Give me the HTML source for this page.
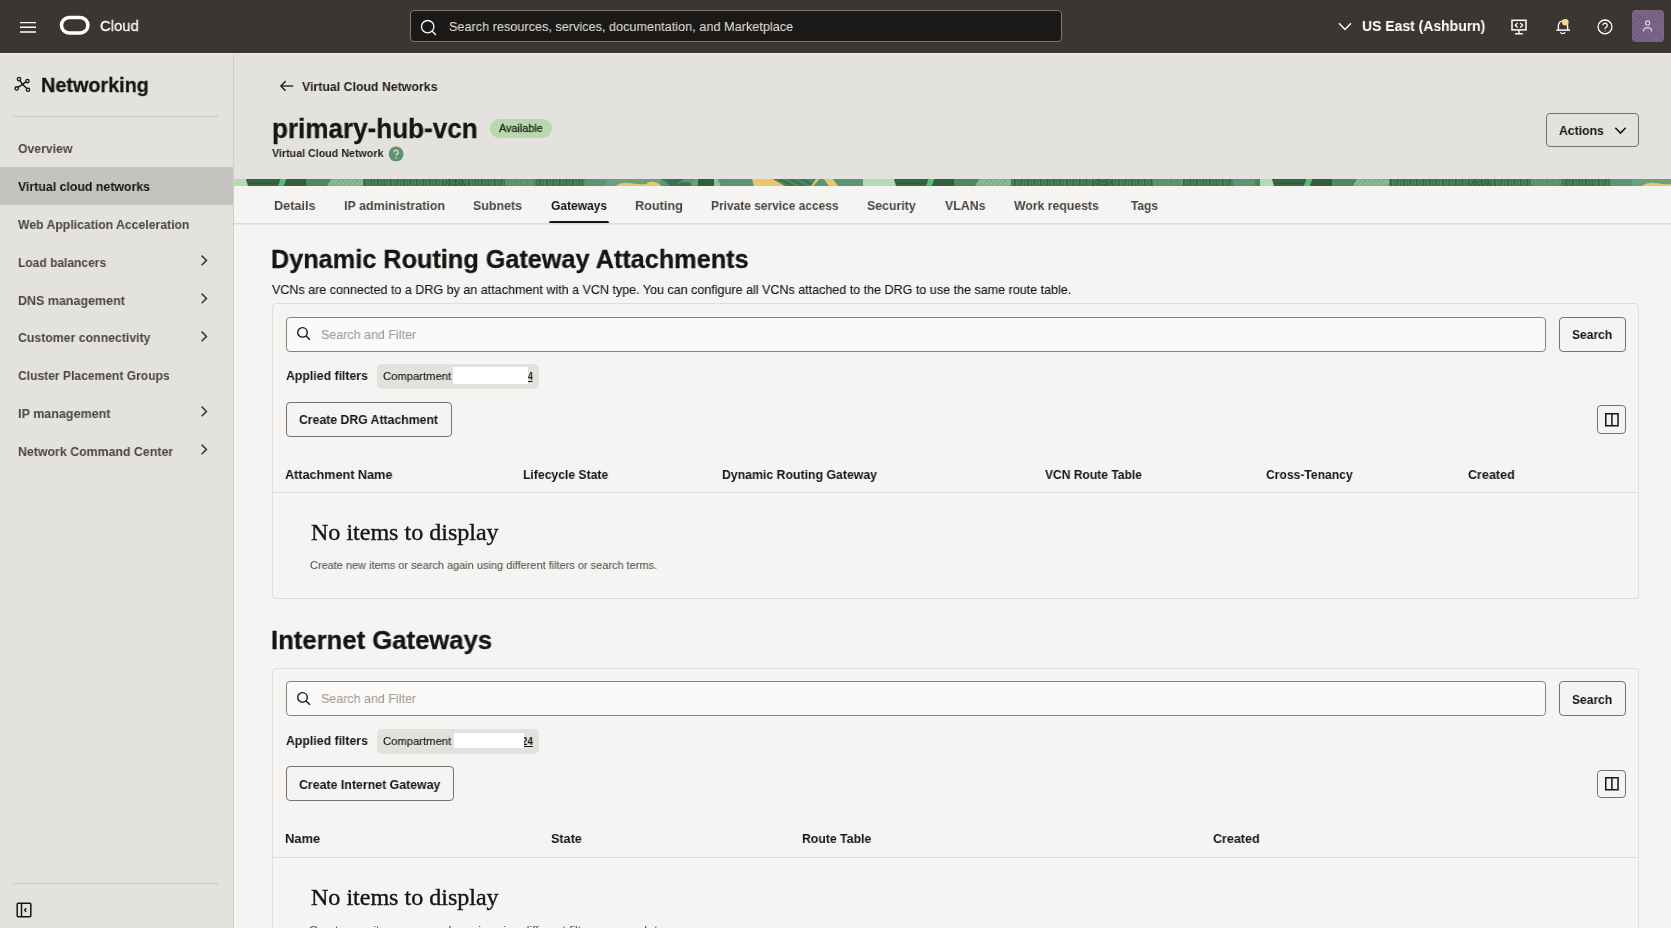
<!DOCTYPE html>
<html lang="en">
<head>
<meta charset="utf-8">
<title>primary-hub-vcn | Virtual Cloud Networks | Oracle Cloud</title>
<style>
*{box-sizing:border-box;margin:0;padding:0}
html,body{width:1671px;height:928px;overflow:hidden;background:#f5f4f2}
body{font-family:"Liberation Sans",sans-serif;color:#161513;position:relative;font-size:13.5px}
.abs{position:absolute}
.t{will-change:transform;transform-origin:0 0;position:absolute;white-space:nowrap;line-height:1;font-weight:normal;z-index:5}
#top{position:absolute;left:0;top:0;width:1671px;height:53px;background:#3a3632;border-bottom:1px solid #393531;z-index:3}
#toplight{position:absolute;left:0;top:53px;width:1671px;height:1px;background:#edebe8;z-index:2}
#gsearch{position:absolute;left:410px;top:10px;width:652px;height:32px;background:#1b1917;border:1px solid #7d7873;border-radius:4px}
#avatar{position:absolute;left:1632px;top:10px;width:32px;height:32px;border-radius:4px;background:#7b6487;overflow:hidden}
#side{position:absolute;left:0;top:52px;width:234px;height:876px;background:#e4e2de;border-right:1px solid #d2cfcb}
.navsel{position:absolute;left:0;width:233px;height:37.700px;background:#c5c3bf}
.hr{position:absolute;height:1px;background:#c9c5c0}
#hdr{position:absolute;left:234px;top:52px;width:1437px;height:127px;background:#e4e2de}
#band{position:absolute;left:234px;top:179px;width:1437px;height:7.500px;overflow:hidden;background:#5c8a68}
#tabs{position:absolute;left:234px;top:186px;width:1437px;height:37px;background:#f5f4f2;box-shadow:0 1px 0 #dcdad7,0 2px 0 #ebe9e7}
.btn{position:absolute;border:1px solid #77726d;border-radius:4px;background:transparent}
.panel{position:absolute;left:272px;width:1367px;border:1px solid #dfdcd9;border-radius:4px;background:#f5f4f2}
.sinput{position:absolute;left:13px;width:1260px;height:35px;border:1px solid #85817d;border-radius:4px;background:#fbfaf9}
.chip{position:absolute;left:104px;width:162px;height:25px;border-radius:5px;background:#e3e1dd}
.chip .red{position:absolute;background:#fff;z-index:6}
.serif{font-family:"Liberation Serif",serif}
</style>
</head>
<body>
<!-- ============ TOP BAR ============ -->
<div id="top">
  <svg class="abs" style="left:19px;top:21px" width="18" height="13" viewBox="0 0 18 13"><path d="M1 1.600h16M1 6.300h16M1 11h16" stroke="#fff" stroke-width="1.400" fill="none"/></svg>
  <svg class="abs" style="left:59px;top:15px" width="32" height="21" viewBox="0 0 32 21"><rect x="2.500" y="2.500" width="26.400" height="15.500" rx="7.750" fill="none" stroke="#fff" stroke-width="3.500"/></svg>
  <div id="gsearch">
    <svg class="abs" style="left:9px;top:8px" width="18" height="18" viewBox="0 0 18 18"><circle cx="7.700" cy="7.700" r="6.200" fill="none" stroke="#fff" stroke-width="1.300"/><path d="M12.200 12.200L16 16" stroke="#fff" stroke-width="1.300"/></svg>
  </div>
  <svg class="abs" style="left:1338px;top:22px" width="14" height="10" viewBox="0 0 14 10"><path d="M1 1.300l6 6.200 6-6.200" stroke="#fff" stroke-width="1.400" fill="none"/></svg>
  <!-- cloud shell -->
  <svg class="abs" style="left:1510px;top:18px" width="18" height="18" viewBox="0 0 18 18" fill="none" stroke="#fff" stroke-width="1.500"><rect x="2" y="2.300" width="14" height="9.600"/><path d="M8.900 12v3.600M5.100 15.700h7.700" stroke-width="1.400"/><path d="M7.600 4.900L5.300 7.200l2.300 2.300M10.300 4.900l2.300 2.300-2.300 2.300" stroke-width="1.300"/></svg>
  <!-- bell -->
  <svg class="abs" style="left:1554px;top:17px" width="18" height="19" viewBox="0 0 18 19" fill="none" stroke="#fff" stroke-width="1.400"><path d="M4.400 12.800V8.600a4.600 4.600 0 0 1 9.200 0v4.200"/><path d="M2.400 13.100h13.600" stroke-width="1.500"/><path d="M6.300 15.300c1 1.800 3.900 1.800 4.900 0" stroke-width="1.300"/><circle cx="11.300" cy="5.300" r="3.300" fill="#f5d88c" stroke="none"/></svg>
  <!-- help -->
  <svg class="abs" style="left:1596px;top:18px" width="18" height="18" viewBox="0 0 18 18" fill="none" stroke="#fff" stroke-width="1.300"><circle cx="9" cy="8.900" r="6.900"/><path d="M6.800 7.300a2.200 2.200 0 1 1 3.400 1.900c-.8.500-1.200.9-1.200 1.700"/><circle cx="9" cy="12.800" r=".6" fill="#fff" stroke="none"/></svg>
  <div id="avatar">
    <svg class="abs" style="left:0;top:0" width="32" height="32" viewBox="0 0 32 32" fill="none"><g stroke="#6b5777" stroke-width="1"><path d="M-2 6L26 34M-2 10L22 34M-2 14L18 34M-2 18L14 34M-2 22L10 34M-2 26L6 34M2 4L30 30M6 4L31 27"/><path d="M6 8L30 2M4 12L31 5M8 15L32 9" stroke-dasharray="3 2" opacity=".8"/></g><circle cx="15.600" cy="12.900" r="2.100" stroke="#ddd4de" stroke-width="1.200"/><path d="M11.500 21.600c0-3 1.800-3.900 4.100-3.900s4.100.9 4.100 3.900" stroke="#ddd4de" stroke-width="1.200"/></svg>
  </div>
</div>

<div id="toplight"></div>

<!-- ============ SIDEBAR ============ -->
<div id="side">
  <svg class="abs" style="left:14px;top:24px" width="17" height="17" viewBox="0 0 17 17" fill="none" stroke="#161513" stroke-width="1.300"><circle cx="5" cy="3" r="1.650"/><circle cx="13.400" cy="5.100" r="1.650"/><circle cx="2.700" cy="12.400" r="1.650"/><circle cx="14" cy="13.750" r="1.650"/><path d="M5.900 4.300L8.600 8.400M12 5.900L8.600 8.400M3.900 11.400L8.600 8.400M12.900 12.600L8.600 8.400" stroke-width="1.400"/></svg>
  <div class="hr" style="left:13px;top:64px;width:205px"></div>
  <div class="navsel" style="top:115.100px"></div>
  <svg class="abs" style="left:199px;top:201px" width="10" height="14" viewBox="0 0 10 14"><path d="M2.600 2.600l4.900 4.800-4.900 4.800" fill="none" stroke="#3c3834" stroke-width="1.500"/></svg>
  <svg class="abs" style="left:199px;top:239px" width="10" height="14" viewBox="0 0 10 14"><path d="M2.600 2.600l4.900 4.800-4.900 4.800" fill="none" stroke="#3c3834" stroke-width="1.500"/></svg>
  <svg class="abs" style="left:199px;top:277px" width="10" height="14" viewBox="0 0 10 14"><path d="M2.600 2.600l4.900 4.800-4.900 4.800" fill="none" stroke="#3c3834" stroke-width="1.500"/></svg>
  <svg class="abs" style="left:199px;top:352px" width="10" height="14" viewBox="0 0 10 14"><path d="M2.600 2.600l4.900 4.800-4.900 4.800" fill="none" stroke="#3c3834" stroke-width="1.500"/></svg>
  <svg class="abs" style="left:199px;top:390px" width="10" height="14" viewBox="0 0 10 14"><path d="M2.600 2.600l4.900 4.800-4.900 4.800" fill="none" stroke="#3c3834" stroke-width="1.500"/></svg>
  
  <div class="hr" style="left:13px;top:831px;width:205px"></div>
  <svg class="abs" style="left:16px;top:850px" width="16" height="16" viewBox="0 0 16 16" fill="none" stroke="#161513" stroke-width="1.500"><rect x="1.200" y="1.200" width="13.600" height="13.600" rx="1"/><path d="M5.500 1.200v13.600"/><path d="M10.300 6.200L8.500 8l1.800 1.800" stroke-width="1.300"/></svg>
</div>

<!-- ============ PAGE HEADER ============ -->
<div id="hdr">
  <svg class="abs" style="left:45px;top:28px" width="15" height="12" viewBox="0 0 15 12"><path d="M14.300 6H2.200" fill="none" stroke="#161513" stroke-width="1.250"/><path d="M6.600 1.300L1.900 6l4.700 4.700" fill="none" stroke="#161513" stroke-width="1.400"/></svg>
  <div class="abs" style="left:256px;top:67px;width:62px;height:19px;border-radius:10px;background:#b9d8ae"></div>
  <svg class="abs" style="left:154px;top:94px" width="16" height="16" viewBox="0 0 16 16"><circle cx="8.100" cy="7.900" r="7.400" fill="#61926f"/><path d="M5.900 6.200a2.100 2.100 0 1 1 3.100 1.900c-.7.400-1 .8-1 1.500" fill="none" stroke="#e4e2de" stroke-width="1.300"/><circle cx="8" cy="11.700" r=".8" fill="#e4e2de"/></svg>
  <div class="btn" style="left:1312px;top:61px;width:93px;height:34px"><svg class="abs" style="left:67px;top:12px" width="13" height="9" viewBox="0 0 13 9"><path d="M1.300 1.800l5.200 5.200 5.200-5.200" fill="none" stroke="#161513" stroke-width="1.600"/></svg></div>
</div>

<div id="band"><svg class="abs" style="left:0;top:0" width="1437" height="7" viewBox="0 0 1437 7" preserveAspectRatio="none"><defs>
<pattern id="str" width="6.500" height="7" patternUnits="userSpaceOnUse"><rect x="0" y="0" width="1.600" height="7" fill="#2c5a3a" opacity=".75"/><rect x="3.600" y="0" width="1.100" height="7" fill="#2c5a3a" opacity=".5"/></pattern>
<pattern id="zz" width="4" height="4" patternUnits="userSpaceOnUse"><path d="M0 1l2 2l2-2" stroke="#497a57" stroke-width=".7" fill="none"/></pattern>
<pattern id="dots" width="5" height="4" patternUnits="userSpaceOnUse"><circle cx="1.500" cy="2" r=".7" fill="#a8484f"/></pattern>
<pattern id="tex" width="9" height="7" patternUnits="userSpaceOnUse"><path d="M0 6L4 1M4 6L9 2" stroke="#a6cdb0" stroke-width=".8" fill="none"/></pattern>
<g id="tile"><rect x="0" y="0" width="15.0" height="7" fill="#b7dab1"/><polygon points="12,0 46,0 44,7 14,7" fill="#2f5e3c"/><rect x="14" y="0" width="30" height="7" fill="url(#zz)"/><polygon points="46.5,0 52.5,0 50,7 44,7" fill="#52bd71"/><polygon points="52.5,0 72,0 72,7 50,7" fill="#2f5e3c"/><rect x="54" y="2" width="16" height="4" fill="url(#dots)"/><rect x="72" y="0" width="25.0" height="7" fill="#4f8762"/><polygon points="97,0 129,0 129,7 93,7" fill="#7fb08e"/><rect x="95" y="0" width="34" height="7" fill="url(#tex)"/><rect x="129" y="0" width="222.0" height="7" fill="#4a845e"/><rect x="129" y="0" width="222" height="7" fill="url(#str)"/><rect x="271" y="0" width="30" height="7" fill="#6ea581" opacity=".6"/><g fill="none" stroke="#2c5a3a" stroke-width="1"><circle cx="221" cy="9" r="4"/><circle cx="221" cy="9" r="7"/><circle cx="221" cy="9" r="10"/></g><rect x="350.6" y="0" width="22.4" height="7" fill="#5d9572"/><rect x="372" y="0" width="56.0" height="7" fill="#6ba07d"/><path d="M382 7C386 3.500 392 3.300 398 4.300C404 5.600 408 5.500 412 5C415 2.300 419 2 422 3.300C424 4.200 426 6 427.500 7Z" fill="#ebc66a"/><rect x="427" y="0" width="37.0" height="7" fill="#5d9572"/><polygon points="427,0 450,0 440,7 436,7 432,3" fill="#3b7250"/><polygon points="440,7 448,3 455,3 459,7" fill="#3b7250"/><polygon points="461,0 464,0 464,7 457,7" fill="#6ba07d"/><rect x="464" y="0" width="16.5" height="7" fill="#2f5e3c"/><rect x="467" y="2" width="12" height="4" fill="url(#dots)"/><polygon points="480,0 484,0 487,7 480,7" fill="#8dbf9a"/><polygon points="484,0 520,0 520,7 487,7" fill="#5d9572"/><polygon points="518,0 539,0 551,7 520,7" fill="#ebc66a"/><polygon points="539,0 585,0 578,7 551,7" fill="#4f8762"/><g stroke="#3b7250" stroke-width="2.500"><path d="M545 0l14 7M556 0l14 7M567 0l12 6"/></g><polygon points="582,0 585.5,0 579.5,7 577,7" fill="#ebc66a"/><polygon points="585.5,0 591,0 596,7 579.5,7" fill="#5d9572"/><polygon points="590,0 599,0 604.5,7 595,7" fill="#ebc66a"/><polygon points="599,0 631,0 628,7 604.5,7" fill="#5d9572"/><rect x="629" y="0" width="34.0" height="7" fill="#b7dab1"/><polygon points="660,0 694,0 692,7 662,7" fill="#2f5e3c"/><rect x="662" y="0" width="30" height="7" fill="url(#zz)"/><polygon points="694.5,0 700.5,0 698,7 692,7" fill="#52bd71"/><polygon points="700.5,0 720,0 720,7 698,7" fill="#2f5e3c"/><rect x="702" y="2" width="16" height="4" fill="url(#dots)"/><rect x="720" y="0" width="25.0" height="7" fill="#4f8762"/><polygon points="745,0 777,0 777,7 741,7" fill="#7fb08e"/><rect x="743" y="0" width="34" height="7" fill="url(#tex)"/><rect x="777" y="0" width="222.0" height="7" fill="#4a845e"/><rect x="777" y="0" width="222" height="7" fill="url(#str)"/><rect x="919" y="0" width="30" height="7" fill="#6ea581" opacity=".6"/><g fill="none" stroke="#2c5a3a" stroke-width="1"><circle cx="869" cy="9" r="4"/><circle cx="869" cy="9" r="7"/><circle cx="869" cy="9" r="10"/></g><rect x="998.6" y="0" width="22.4" height="7" fill="#5d9572"/></g></defs>
<rect width="1437" height="7" fill="#4a845e"/>
<use href="#tile"/><use href="#tile" x="1026"/>
</svg></div>

<!-- ============ TABS ============ -->
<div id="tabs">
  <div class="abs" style="left:315px;top:35px;width:60px;height:2px;background:#161513;border-radius:1.500px 1.500px 0 0"></div>
</div>

<div class="panel" style="top:303px;height:296px">
  <div class="sinput" style="top:13px"><svg class="abs" style="left:9px;top:8px" width="16" height="16" viewBox="0 0 16 16"><circle cx="6.500" cy="6.400" r="4.750" fill="none" stroke="#161513" stroke-width="1.400"/><path d="M9.900 9.800l4 4" stroke="#161513" stroke-width="1.400"/></svg></div>
  <div class="btn" style="left:1286px;top:13px;width:67px;height:35px"></div>
  <div class="chip" style="top:60px"><div class="red" style="left:76px;top:3px;width:75px;height:17px"></div></div>
  <div class="btn" style="left:13px;top:98px;width:166px;height:35px"></div>
  <div class="btn" style="left:1324px;top:101px;width:29px;height:29px"><svg class="abs" style="left:6px;top:6px" width="15" height="15" viewBox="0 0 15 15" fill="none" stroke="#161513" stroke-width="1.500"><rect x="1.750" y="1.750" width="12.300" height="12"/><path d="M7.900 1.750v12"/></svg></div>
  <div class="hr" style="left:0;top:188px;width:1365px;background:#dddad7"></div>
</div>
<div class="panel" style="top:668px;height:300px">
  <div class="sinput" style="top:12px"><svg class="abs" style="left:9px;top:9px" width="16" height="16" viewBox="0 0 16 16"><circle cx="6.500" cy="6.400" r="4.750" fill="none" stroke="#161513" stroke-width="1.400"/><path d="M9.900 9.800l4 4" stroke="#161513" stroke-width="1.400"/></svg></div>
  <div class="btn" style="left:1286px;top:12px;width:67px;height:35px"></div>
  <div class="chip" style="top:60px"><div class="red" style="left:77px;top:4px;width:70px;height:15px"></div></div>
  <div class="btn" style="left:13px;top:97px;width:168px;height:35px"></div>
  <div class="btn" style="left:1324px;top:101px;width:29px;height:28px"><svg class="abs" style="left:6px;top:5px" width="15" height="15" viewBox="0 0 15 15" fill="none" stroke="#161513" stroke-width="1.500"><rect x="1.750" y="1.750" width="12.300" height="12"/><path d="M7.900 1.750v12"/></svg></div>
  <div class="hr" style="left:0;top:188px;width:1365px;background:#dddad7"></div>
</div>


<!-- ============ TEXT ============ -->
<span class="t" id="cloud" style="left:100px;top:18.0019px;font-size:15.5px;color:#fff;transform:scaleX(0.9551);-webkit-text-stroke:0.3px #fff">Cloud</span>
<span class="t" id="gs" style="left:449px;top:20.0044px;font-size:13.5px;color:#dedad6;transform:scaleX(0.9398);-webkit-text-stroke:0.12px #dedad6">Search resources, services, documentation, and Marketplace</span>
<span class="t" id="region" style="left:1362px;top:18.005px;font-size:15.2px;color:#fff;transform:scaleX(0.9191);font-weight:bold">US East (Ashburn)</span>
<span class="t" id="netw" style="left:41px;top:75.0075px;font-size:20.3px;color:#161513;transform:scaleX(0.9761);font-weight:bold;-webkit-text-stroke:0.3px #161513">Networking</span>
<span class="t" id="n0" style="left:18px;top:142.005px;font-size:13.2px;color:#4b4642;transform:scaleX(0.9272);font-weight:bold">Overview</span>
<span class="t" id="n1" style="left:18px;top:180.005px;font-size:13.2px;color:#161513;transform:scaleX(0.9352);font-weight:bold">Virtual cloud networks</span>
<span class="t" id="n2" style="left:18px;top:218.0081px;font-size:13.2px;color:#4b4642;transform:scaleX(0.927);font-weight:bold">Web Application Acceleration</span>
<span class="t" id="n3" style="left:18px;top:256.005px;font-size:13.2px;color:#4b4642;transform:scaleX(0.9109);font-weight:bold">Load balancers</span>
<span class="t" id="n4" style="left:18px;top:294.0019px;font-size:13.2px;color:#4b4642;transform:scaleX(0.9469);font-weight:bold">DNS management</span>
<span class="t" id="n5" style="left:18px;top:331.0144px;font-size:13.2px;color:#4b4642;transform:scaleX(0.9317);font-weight:bold">Customer connectivity</span>
<span class="t" id="n6" style="left:18px;top:369.0081px;font-size:13.2px;color:#4b4642;transform:scaleX(0.9157);font-weight:bold">Cluster Placement Groups</span>
<span class="t" id="n7" style="left:18px;top:407.0019px;font-size:13.2px;color:#4b4642;transform:scaleX(0.951);font-weight:bold">IP management</span>
<span class="t" id="n8" style="left:18px;top:445.0019px;font-size:13.2px;color:#4b4642;transform:scaleX(0.9366);font-weight:bold">Network Command Center</span>
<span class="t" id="back" style="left:302px;top:80.0056px;font-size:13.3px;color:#201d1a;transform:scaleX(0.9276);font-weight:bold">Virtual Cloud Networks</span>
<h1 class="t" id="title" style="left:272px;top:116.015px;font-size:27px;color:#161513;transform:scaleX(0.9655);font-weight:bold;-webkit-text-stroke:0.3px #161513">primary-hub-vcn</h1>
<span class="t" id="avail" style="left:499px;top:123.0113px;font-size:11.3px;color:#1c2419;transform:scaleX(0.9595);-webkit-text-stroke:0.3px #1c2419">Available</span>
<span class="t" id="vcnlbl" style="left:272px;top:147.0112px;font-size:11.6px;color:#201d1a;transform:scaleX(0.9217);font-weight:bold">Virtual Cloud Network</span>
<span class="t" id="actions" style="left:1559px;top:124.0088px;font-size:13.3px;color:#161513;transform:scaleX(0.9209);font-weight:bold">Actions</span>
<span class="t" id="t0" style="left:274px;top:199.0075px;font-size:13.5px;color:#4b4642;transform:scaleX(0.9384);font-weight:bold">Details</span>
<span class="t" id="t1" style="left:344px;top:199.0075px;font-size:13.5px;color:#4b4642;transform:scaleX(0.925);font-weight:bold">IP administration</span>
<span class="t" id="t2" style="left:473px;top:199.0075px;font-size:13.5px;color:#4b4642;transform:scaleX(0.9199);font-weight:bold">Subnets</span>
<span class="t" id="t3" style="left:551px;top:199.0075px;font-size:13.5px;color:#161513;transform:scaleX(0.8897);font-weight:bold">Gateways</span>
<span class="t" id="t4" style="left:635px;top:199.0075px;font-size:13.5px;color:#4b4642;transform:scaleX(0.9383);font-weight:bold">Routing</span>
<span class="t" id="t5" style="left:711px;top:199.0075px;font-size:13.5px;color:#4b4642;transform:scaleX(0.8858);font-weight:bold">Private service access</span>
<span class="t" id="t6" style="left:867px;top:199.0075px;font-size:13.5px;color:#4b4642;transform:scaleX(0.9141);font-weight:bold">Security</span>
<span class="t" id="t7" style="left:945px;top:199.0075px;font-size:13.5px;color:#4b4642;transform:scaleX(0.9149);font-weight:bold">VLANs</span>
<span class="t" id="t8" style="left:1014px;top:199.0075px;font-size:13.5px;color:#4b4642;transform:scaleX(0.9069);font-weight:bold">Work requests</span>
<span class="t" id="t9" style="left:1131px;top:199.0075px;font-size:13.5px;color:#4b4642;transform:scaleX(0.8837);font-weight:bold">Tags</span>
<h2 class="t" id="h2a" style="left:271px;top:246.0056px;font-size:26px;color:#161513;transform:scaleX(0.9714);font-weight:bold;-webkit-text-stroke:0.3px #161513">Dynamic Routing Gateway Attachments</h2>
<span class="t" id="desc" style="left:272px;top:283.0106px;font-size:13.5px;color:#161513;transform:scaleX(0.9277);-webkit-text-stroke:0.12px #161513">VCNs are connected to a DRG by an attachment with a VCN type. You can configure all VCNs attached to the DRG to use the same route table.</span>
<h2 class="t" id="h2b" style="left:271px;top:627.0056px;font-size:26px;color:#161513;transform:scaleX(0.9874);font-weight:bold;-webkit-text-stroke:0.3px #161513">Internet Gateways</h2>
<span class="t" id="aph" style="left:321px;top:328.0056px;font-size:13.3px;color:#a19c97;transform:scaleX(0.9397);-webkit-text-stroke:0.12px #a19c97">Search and Filter</span>
<span class="t" id="asb" style="left:1572px;top:328.0056px;font-size:13.3px;color:#161513;transform:scaleX(0.9057);font-weight:bold">Search</span>
<span class="t" id="aaf" style="left:286px;top:369.0056px;font-size:13.3px;color:#161513;transform:scaleX(0.9236);font-weight:bold">Applied filters</span>
<span class="t" id="acp" style="left:383px;top:371.0044px;font-size:11.5px;color:#161513;transform:scaleX(0.9783);-webkit-text-stroke:0.12px #161513">Compartment</span>
<span class="t" id="anm" style="left:528px;top:371.0044px;font-size:11.5px;color:#161513;transform:scaleX(0.7286);font-weight:bold;text-decoration:underline">4</span>
<span class="t" id="acb" style="left:299px;top:413.0056px;font-size:13.3px;color:#161513;transform:scaleX(0.9203);font-weight:bold">Create DRG Attachment</span>
<span class="t serif" id="ani" style="left:311px;top:520.0094px;font-size:24px;color:#161513;transform:scaleX(1.0016);-webkit-text-stroke:0.4px #161513">No items to display</span>
<span class="t" id="ast" style="left:310px;top:560.0081px;font-size:11.3px;color:#5a5551;transform:scaleX(0.9703);-webkit-text-stroke:0.12px #5a5551">Create new items or search again using different filters or search terms.</span>
<span class="t" id="ah0" style="left:285px;top:468.0056px;font-size:13.3px;color:#161513;transform:scaleX(0.9495);font-weight:bold">Attachment Name</span>
<span class="t" id="ah1" style="left:523px;top:468.0056px;font-size:13.3px;color:#161513;transform:scaleX(0.9152);font-weight:bold">Lifecycle State</span>
<span class="t" id="ah2" style="left:722px;top:468.0056px;font-size:13.3px;color:#161513;transform:scaleX(0.9242);font-weight:bold">Dynamic Routing Gateway</span>
<span class="t" id="ah3" style="left:1045px;top:468.0056px;font-size:13.3px;color:#161513;transform:scaleX(0.9065);font-weight:bold">VCN Route Table</span>
<span class="t" id="ah4" style="left:1266px;top:468.0056px;font-size:13.3px;color:#161513;transform:scaleX(0.9111);font-weight:bold">Cross-Tenancy</span>
<span class="t" id="ah5" style="left:1468px;top:468.0056px;font-size:13.3px;color:#161513;transform:scaleX(0.9423);font-weight:bold">Created</span>
<span class="t" id="bph" style="left:321px;top:692.0056px;font-size:13.3px;color:#a19c97;transform:scaleX(0.9397);-webkit-text-stroke:0.12px #a19c97">Search and Filter</span>
<span class="t" id="bsb" style="left:1572px;top:693.0056px;font-size:13.3px;color:#161513;transform:scaleX(0.9057);font-weight:bold">Search</span>
<span class="t" id="baf" style="left:286px;top:734.0056px;font-size:13.3px;color:#161513;transform:scaleX(0.9236);font-weight:bold">Applied filters</span>
<span class="t" id="bcp" style="left:383px;top:736.0044px;font-size:11.5px;color:#161513;transform:scaleX(0.9783);-webkit-text-stroke:0.12px #161513">Compartment</span>
<span class="t" id="bnm" style="left:522px;top:736.0044px;font-size:11.5px;color:#161513;transform:scaleX(0.8510);font-weight:bold;text-decoration:underline">24</span>
<span class="t" id="bcb" style="left:299px;top:778.0056px;font-size:13.3px;color:#161513;transform:scaleX(0.9287);font-weight:bold">Create Internet Gateway</span>
<span class="t serif" id="bni" style="left:311px;top:885.0094px;font-size:24px;color:#161513;transform:scaleX(1.0016);-webkit-text-stroke:0.4px #161513">No items to display</span>
<span class="t" id="bst" style="left:309px;top:925.0081px;font-size:11.3px;color:#5a5551;transform:scaleX(1.0577);-webkit-text-stroke:0.12px #5a5551">Create new items or search again using different filters or search terms.</span>
<span class="t" id="bh0" style="left:285px;top:832.0056px;font-size:13.3px;color:#161513;transform:scaleX(0.9726);font-weight:bold">Name</span>
<span class="t" id="bh1" style="left:551px;top:832.0056px;font-size:13.3px;color:#161513;transform:scaleX(0.9484);font-weight:bold">State</span>
<span class="t" id="bh2" style="left:802px;top:832.0056px;font-size:13.3px;color:#161513;transform:scaleX(0.9214);font-weight:bold">Route Table</span>
<span class="t" id="bh3" style="left:1213px;top:832.0056px;font-size:13.3px;color:#161513;transform:scaleX(0.9406);font-weight:bold">Created</span>
</body>
</html>
